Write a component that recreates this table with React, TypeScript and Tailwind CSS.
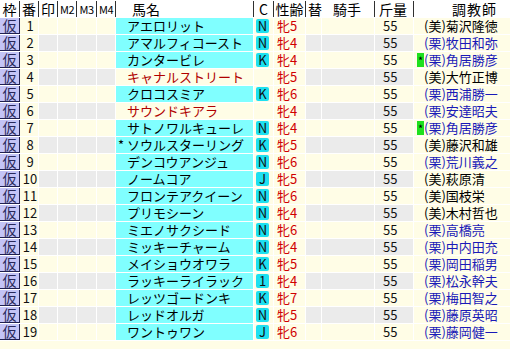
import React from "react";

type Horse = {
  no: number;
  name: string;
  mark?: string;
  red?: boolean;
  c?: string;
  sex: string;
  area: "美" | "栗";
  trainer: string;
  star?: boolean;
};

const horses: Horse[] = [
  { no: 1, name: "アエロリット", c: "N", sex: "牝5", area: "美", trainer: "菊沢隆徳" },
  { no: 2, name: "アマルフィコースト", c: "N", sex: "牝4", area: "栗", trainer: "牧田和弥" },
  { no: 3, name: "カンタービレ", c: "K", sex: "牝4", area: "栗", trainer: "角居勝彦", star: true },
  { no: 4, name: "キャナルストリート", red: true, sex: "牝5", area: "美", trainer: "大竹正博" },
  { no: 5, name: "クロコスミア", c: "K", sex: "牝6", area: "栗", trainer: "西浦勝一" },
  { no: 6, name: "サウンドキアラ", red: true, sex: "牝4", area: "栗", trainer: "安達昭夫" },
  { no: 7, name: "サトノワルキューレ", c: "N", sex: "牝4", area: "栗", trainer: "角居勝彦", star: true },
  { no: 8, name: "ソウルスターリング", mark: "*", c: "K", sex: "牝5", area: "美", trainer: "藤沢和雄" },
  { no: 9, name: "デンコウアンジュ", c: "N", sex: "牝6", area: "栗", trainer: "荒川義之" },
  { no: 10, name: "ノームコア", c: "J", sex: "牝5", area: "美", trainer: "萩原清" },
  { no: 11, name: "フロンテアクイーン", c: "N", sex: "牝6", area: "美", trainer: "国枝栄" },
  { no: 12, name: "プリモシーン", c: "N", sex: "牝4", area: "美", trainer: "木村哲也" },
  { no: 13, name: "ミエノサクシード", c: "N", sex: "牝6", area: "栗", trainer: "高橋亮" },
  { no: 14, name: "ミッキーチャーム", c: "N", sex: "牝4", area: "栗", trainer: "中内田充" },
  { no: 15, name: "メイショウオワラ", c: "K", sex: "牝5", area: "栗", trainer: "岡田稲男" },
  { no: 16, name: "ラッキーライラック", c: "1", sex: "牝4", area: "栗", trainer: "松永幹夫" },
  { no: 17, name: "レッツゴードンキ", c: "K", sex: "牝7", area: "栗", trainer: "梅田智之" },
  { no: 18, name: "レッドオルガ", c: "N", sex: "牝5", area: "栗", trainer: "藤原英昭" },
  { no: 19, name: "ワントゥワン", c: "J", sex: "牝6", area: "栗", trainer: "藤岡健一" },
];

const COLS =
  "grid grid-cols-[20px_19px_19px_19px_20px_19px_138px_20px_32px_16px_53px_39px_96px]";

const HeadCell = ({ children, className = "" }: { children?: React.ReactNode; className?: string }) => (
  <div className={`flex h-full items-center border-r border-[#303030] ${className}`}>{children}</div>
);

const HorseRow = ({ h }: { h: Horse }) => {
  const alt = h.no % 2 === 0 ? "bg-[#ebebeb]" : "bg-[#fffde6]";
  const cell = "h-[17px] border-b border-r border-white";
  return (
    <div className={`${COLS} h-[17px] text-[13px]/[16px]`}>
      <div className="h-[17px] border-b border-white bg-white">
        <div className="flex h-[16px] items-center justify-center border-b border-r border-[#202050] bg-[#c4c4f6] text-[14px]/[15px] text-[#28285a]">
          仮
        </div>
      </div>
      <div className={`${cell} flex items-center justify-center bg-[#fffde6] pl-[2px]`}>{h.no}</div>
      <div className={`${cell} ${alt}`} />
      <div className={`${cell} ${alt}`} />
      <div className={`${cell} ${alt}`} />
      <div className={`${cell} ${alt}`} />
      <div
        className={`${cell} flex items-center whitespace-nowrap pl-[2px] ${
          h.red ? "bg-[#fffde6] text-[#b00000]" : "bg-[#80ffff] text-black"
        }`}
      >
        <span className="inline-block w-[9px]">{h.mark}</span>
        <span>{h.name}</span>
      </div>
      <div className={`${cell} flex items-center bg-[#fffde6] pl-[2px]`}>
        {h.c && (
          <span className="flex h-[14px] w-[13px] items-center justify-center rounded-[2px] bg-[#1ee0f0] text-[13px]/[14px] text-[#101010]">
            {h.c}
          </span>
        )}
      </div>
      <div className={`${cell} flex items-center bg-[#fffde6] pl-[3px] text-[#d00000]`}>{h.sex}</div>
      <div className={`${cell} ${alt}`} />
      <div className={`${cell} ${alt}`} />
      <div className={`${cell} ${alt} flex items-center pl-[8px]`}>55</div>
      <div
        className={`flex h-[17px] items-center whitespace-nowrap border-b border-white bg-[#fffde6] pl-[3px] ${
          h.area === "美" ? "text-black" : "text-[#1a1ab8]"
        }`}
      >
        <span className="flex h-[14px] w-[7px] items-center justify-center">
          {h.star && (
            <span className="flex h-[14px] w-[7px] items-center justify-center bg-[#1ee01e] text-[11px]/[14px] text-black">
              *
            </span>
          )}
        </span>
        <span>
          ({h.area}){h.trainer}
        </span>
      </div>
    </div>
  );
};

export default function App() {
  return (
    <div
      className="h-[349px] w-[510px] overflow-hidden bg-[#fffde6] text-[#111]"
      style={{ fontFamily: '"Noto Sans CJK JP", "Noto Sans", sans-serif' }}
    >
      <div className={`${COLS} h-[18px] border-b border-white bg-white py-[1px] text-[14px]/[16px] text-black`}>
        <HeadCell className="justify-center">枠</HeadCell>
        <HeadCell className="justify-center">番</HeadCell>
        <HeadCell className="justify-center">印</HeadCell>
        <HeadCell className="justify-center text-[11px]/[16px] tracking-[-0.5px]">M2</HeadCell>
        <HeadCell className="justify-center text-[11px]/[16px] tracking-[-0.5px]">M3</HeadCell>
        <HeadCell className="justify-center text-[11px]/[16px] tracking-[-0.5px]">M4</HeadCell>
        <HeadCell className="pl-[16px]">馬名</HeadCell>
        <HeadCell className="justify-center">C</HeadCell>
        <HeadCell className="justify-center">性齢</HeadCell>
        <div className="col-span-2 flex h-full items-center gap-[11px] border-r border-[#303030] pl-[2px]">
          <span>替</span>
          <span>騎手</span>
        </div>
        <HeadCell className="pl-[4px]">斤量</HeadCell>
        <div className="flex h-full items-center pl-[38px] tracking-[1px]">調教師</div>
      </div>
      {horses.map((h) => (
        <HorseRow key={h.no} h={h} />
      ))}
    </div>
  );
}
